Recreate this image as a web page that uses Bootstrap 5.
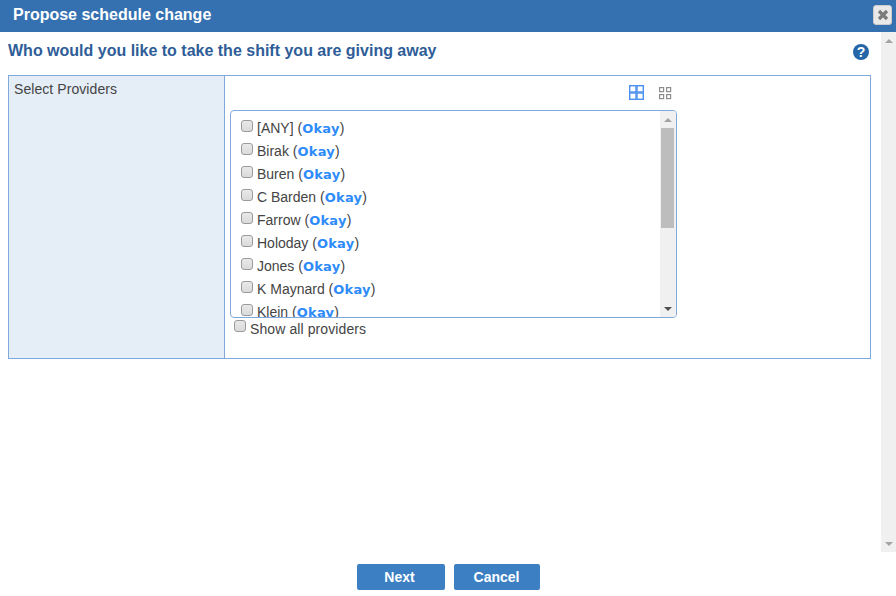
<!DOCTYPE html>
<html lang="en">
<head>
    <meta charset="UTF-8">
    <title>Propose schedule change</title>
    <link rel="stylesheet" href="https://cdn.jsdelivr.net/npm/bootstrap@5.3.0/dist/css/bootstrap.min.css">
    <style>
        html, body { height: 596px; overflow: hidden; }
        body { font-family: "Liberation Sans", Arial, sans-serif; font-size: 14px; color: #444; background: #fff; }

        /* Dialog header */
        .dlg-head { height: 32px; background: #3571b0; color: #fff; font-size: 16px; font-weight: 700; padding: 0 0 2px 13px; }
        .dlg-close { position: absolute; top: 5px; right: 4px; width: 19px; height: 20px; background: #e9e9e9; border: 1px solid #ccc; border-radius: 3px; padding: 0; }

        /* Page scrollbar */
        .dlg-main { height: 520px; }
        .dlg-content { padding: 0 10px 0 8px; }
        .bar-page { width: 15px; background: #f0f0f0; }
        .bar-list { width: 16px; background: #f0f0f0; }
        .arrow-up, .arrow-down { width: 0; height: 0; border-left: 4px solid transparent; border-right: 4px solid transparent; }
        .arrow-up { border-bottom: 4px solid #a3a3a3; }
        .arrow-down { border-top: 4px solid #a3a3a3; }
        .arrow-dark { border-top-color: #505050; }
        .bar-btn { height: 17px; }
        .bar-thumb { height: 100px; background: #bdbdbd; margin: 0 2px 0 1px; }

        /* Title row */
        .dlg-title { height: 43px; padding-top: 9px; }
        .dlg-title h1 { font-size: 16px; font-weight: 700; color: #2f5d98; margin: 0; line-height: 20px; }
        .help-ico { margin: 3px 2px 0 0; }

        /* Form table */
        .form-box { height: 284px; border: 1px solid #7fa8dc; width: 863px; }
        .form-label-col { width: 216px; background: #e5edf7; border-right: 1px solid #7fa8dc; padding: 5px 5px; line-height: 16px; letter-spacing: .07px; }
        .form-field-col { padding: 0 5px; }
        .size-tools { height: 34px; width: 447px; padding: 9px 5px 0 0; gap: 15px; }

        .list-box { width: 447px; height: 208px; border: 1px solid #7fa8dc; border-radius: 4px; overflow: hidden; }
        .list-rows { padding: 6px 0 0 10px; height: 206px; overflow: hidden; }
        .list-row { height: 23px; line-height: 23px; white-space: nowrap; gap: 4px; }
        .chk { appearance: none; display: block; flex: none; width: 12px; height: 12px; margin: 2px 0 0 0; background: linear-gradient(#e9e9e9, #dadada); border: 1px solid #9a9a9a; border-radius: 3px; }
        .list-row .chk { margin-top: 3px; }
        .okay { font-family: "DejaVu Sans", Verdana, sans-serif; font-size: 13px; font-weight: 700; color: #2e8bfa; letter-spacing: .25px; }
        .show-all { padding-left: 4px; height: 22px; line-height: 22px; gap: 4px; letter-spacing: .1px; }

        /* Footer buttons */
        .dlg-foot { height: 44px; padding-top: 12px; gap: 9px; }
        .btn-dlg { height: 26px; padding: 0; background: #3c7fc3; border: 0; border-radius: 2px; color: #fff; font-size: 14px; font-weight: 700; line-height: 26px; }
        .btn-next { width: 88px; padding-right: 2px; }
        .btn-cancel { width: 86px; }
    </style>
</head>
<body>
    <div class="position-relative">
        <div class="dlg-head d-flex align-items-center">Propose schedule change</div>
        <button class="dlg-close d-flex align-items-center justify-content-center" type="button" aria-label="Close">
            <svg width="12" height="12" viewBox="0 0 12 12"><path d="M2 2 L10 10 M10 2 L2 10" stroke="#7a7a7a" stroke-width="3.2"/></svg>
        </button>
    </div>

    <div class="dlg-main d-flex">
        <div class="dlg-content flex-grow-1">
            <div class="dlg-title d-flex justify-content-between align-items-start">
                <h1>Who would you like to take the shift you are giving away</h1>
                <svg class="help-ico" width="16" height="16" viewBox="0 0 16 16">
                    <circle cx="8" cy="8" r="8" fill="#2566a8"/>
                    <text x="8" y="13" text-anchor="middle" fill="#fff" font-family="Liberation Sans" font-size="14" font-weight="700">?</text>
                </svg>
            </div>

            <div class="form-box d-flex">
                <div class="form-label-col">Select Providers</div>
                <div class="form-field-col flex-grow-1">
                    <div class="size-tools d-flex justify-content-end">
                        <svg width="15" height="15" viewBox="0 0 15 15" fill="#fff" stroke="#4a90f0" stroke-width="1.4">
                            <rect x="0.7" y="0.7" width="6.3" height="6.3"/><rect x="8" y="0.7" width="6.3" height="6.3"/>
                            <rect x="0.7" y="8" width="6.3" height="6.3"/><rect x="8" y="8" width="6.3" height="6.3"/>
                        </svg>
                        <svg width="13" height="15" viewBox="0 0 13 15" fill="none" stroke="#8c8c8c" stroke-width="1.2">
                            <rect x="0.6" y="2.6" width="4" height="4"/><rect x="7.6" y="2.6" width="4" height="4"/>
                            <rect x="0.6" y="9.6" width="4" height="4"/><rect x="7.6" y="9.6" width="4" height="4"/>
                        </svg>
                    </div>
                    <div class="list-box d-flex" id="providerBox">
                        <div class="list-rows flex-grow-1" id="providerList"></div>
                        <div class="bar-list d-flex flex-column">
                            <div class="bar-btn d-flex align-items-center justify-content-center"><div class="arrow-up"></div></div>
                            <div class="bar-thumb"></div>
                            <div class="bar-btn d-flex align-items-center justify-content-center mt-auto"><div class="arrow-down arrow-dark"></div></div>
                        </div>
                    </div>
                    <label class="show-all d-flex">
                        <input type="checkbox" class="chk">Show all providers
                    </label>
                </div>
            </div>
        </div>
        <div class="bar-page d-flex flex-column">
            <div class="bar-btn d-flex align-items-center justify-content-center"><div class="arrow-up"></div></div>
            <div class="bar-btn d-flex align-items-center justify-content-center mt-auto"><div class="arrow-down"></div></div>
        </div>
    </div>

    <div class="dlg-foot d-flex justify-content-center">
        <button class="btn-dlg btn-next" type="button">Next</button>
        <button class="btn-dlg btn-cancel" type="button">Cancel</button>
    </div>

    <script>
        const providers = ["[ANY]", "Birak", "Buren", "C Barden", "Farrow", "Holoday", "Jones", "K Maynard", "Klein"];
        document.getElementById("providerList").innerHTML = providers.map(name =>
            `<label class="list-row d-flex"><input type="checkbox" class="chk"><span>${name} (<span class="okay">Okay</span>)</span></label>`
        ).join("");
    </script>
    <script src="https://cdn.jsdelivr.net/npm/bootstrap@5.3.0/dist/js/bootstrap.bundle.min.js"></script>
</body>
</html>
